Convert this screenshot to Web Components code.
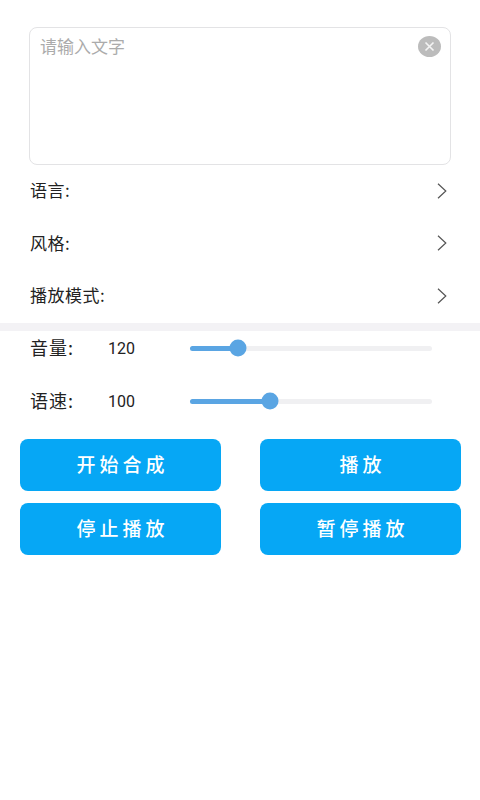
<!DOCTYPE html>
<html lang="zh">
<head>
<meta charset="utf-8">
<title>语音合成</title>
<style>
    html, body { margin: 0; background: #fff; }
    body { font-family: "Noto Sans CJK SC", "Noto Sans", sans-serif; color: #222; }
</style>
</head>
<body>
<tts-page>
    <text-box placeholder="请输入文字"></text-box>
    <option-row>语言:</option-row>
    <option-row>风格:</option-row>
    <option-row>播放模式:</option-row>
    <page-divider></page-divider>
    <value-slider slot="sliders" label="音量:" value="120" percent="19.8"></value-slider>
    <value-slider slot="sliders" label="语速:" value="100" percent="33"></value-slider>
    <action-button slot="buttons">开始合成</action-button>
    <action-button slot="buttons">播放</action-button>
    <action-button slot="buttons">停止播放</action-button>
    <action-button slot="buttons">暂停播放</action-button>
</tts-page>

<script>
class TtsPage extends HTMLElement
{
    constructor()
    {
        super();
        this.shadow = this.attachShadow({ mode: "open" });
    }

    connectedCallback()
    {
        this.shadow.innerHTML = `
            <style>
                :host { display: block; width: 480px; height: 800px; padding-top: 27px; box-sizing: border-box; overflow: hidden; }
                .sliders { display: flex; flex-direction: column; gap: 19px; padding-top: .7px; }
                .buttons { display: grid; grid-template-columns: 201px 201px; justify-content: space-between; row-gap: 12px; margin: 20.3px 19px 0 20px; }
            </style>
            <slot></slot>
            <div class="sliders"><slot name="sliders"></slot></div>
            <div class="buttons"><slot name="buttons"></slot></div>
        `;
    }
}

class TextBox extends HTMLElement
{
    constructor()
    {
        super();
        this.shadow = this.attachShadow({ mode: "open" });
    }

    connectedCallback()
    {
        this.shadow.innerHTML = `
            <style>
                :host { display: flex; justify-content: space-between; align-items: flex-start; box-sizing: border-box; height: 138px; margin: 0 29px; padding: 6px 9px 0 10px; border: 1px solid #e3e3e5; border-radius: 8px; }
                .hint { font-size: 17px; line-height: 24px; color: #ababab; }
                svg { display: block; width: 23px; height: 21px; margin-top: 2px; }
            </style>
            <span class="hint">${this.getAttribute("placeholder")}</span>
            <svg viewBox="0 0 23 21">
                <ellipse cx="11.5" cy="10.5" rx="11.5" ry="10.5" fill="#bcbcbc"/>
                <path d="M7.5 6.5l8 8M15.5 6.5l-8 8" stroke="#f4f4f4" stroke-width="1.7" fill="none"/>
            </svg>
        `;
    }
}

class OptionRow extends HTMLElement
{
    constructor()
    {
        super();
        this.shadow = this.attachShadow({ mode: "open" });
    }

    connectedCallback()
    {
        this.shadow.innerHTML = `
            <style>
                :host { display: flex; justify-content: space-between; align-items: center; box-sizing: border-box; height: 52.6px; padding: 0 33px 1px 30px; font-size: 17px; letter-spacing: .5px; color: #222; }
                span { padding-bottom: 2px; }
                svg { display: block; width: 10px; height: 16px; }
            </style>
            <span><slot></slot></span>
            <svg viewBox="0 0 10 16"><path d="M1 .8L8.8 8 1 15.2" stroke="#555" stroke-width="1.2" fill="none"/></svg>
        `;
    }
}

class PageDivider extends HTMLElement
{
    constructor()
    {
        super();
        this.shadow = this.attachShadow({ mode: "open" });
    }

    connectedCallback()
    {
        this.shadow.innerHTML = `
            <style>
                :host { display: block; height: 8px; background: #f3f2f5; }
            </style>
        `;
    }
}

class ValueSlider extends HTMLElement
{
    constructor()
    {
        super();
        this.shadow = this.attachShadow({ mode: "open" });
    }

    connectedCallback()
    {
        const percent = this.getAttribute("percent");
        this.shadow.innerHTML = `
            <style>
                :host { display: flex; align-items: center; height: 34px; padding-left: 30px; color: #222; }
                .label { width: 78px; padding-bottom: 2px; font-size: 18px; letter-spacing: 1px; }
                .value { width: 82px; font-family: Roboto, sans-serif; font-size: 16px; }
                .track { position: relative; width: 242px; height: 5px; border-radius: 3px; background: #f0f0f2; }
                .fill { width: ${percent}%; height: 100%; border-radius: 3px; background: #5aa5e3; }
                .thumb { position: absolute; left: ${percent}%; top: 50%; width: 17px; height: 17px; border-radius: 50%; background: #5aa5e3; transform: translate(-50%, -50%); }
            </style>
            <span class="label">${this.getAttribute("label")}</span>
            <span class="value">${this.getAttribute("value")}</span>
            <div class="track"><div class="fill"></div><div class="thumb"></div></div>
        `;
    }
}

class ActionButton extends HTMLElement
{
    constructor()
    {
        super();
        this.shadow = this.attachShadow({ mode: "open" });
    }

    connectedCallback()
    {
        this.shadow.innerHTML = `
            <style>
                :host { display: flex; justify-content: center; align-items: center; box-sizing: border-box; height: 52px; padding: 0 0 2px 4px; border-radius: 8px; background: #06a7f5; color: #fff; font-size: 19px; font-weight: 500; letter-spacing: 4px; cursor: pointer; }
            </style>
            <slot></slot>
        `;
    }
}

customElements.define("tts-page", TtsPage);
customElements.define("text-box", TextBox);
customElements.define("option-row", OptionRow);
customElements.define("page-divider", PageDivider);
customElements.define("value-slider", ValueSlider);
customElements.define("action-button", ActionButton);
</script>
</body>
</html>
